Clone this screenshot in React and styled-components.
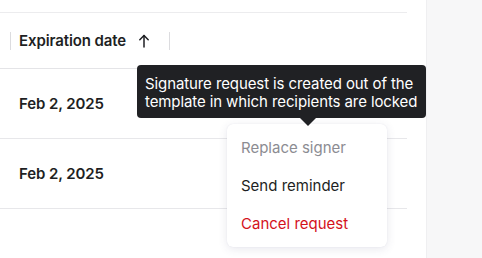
import React from 'react'
import styled, { createGlobalStyle } from 'styled-components'

const GlobalStyle = createGlobalStyle`
  html, body {
    margin: 0;
    padding: 0;
    background: #ffffff;
    font-family: Inter, "Liberation Sans", sans-serif;
    -webkit-font-smoothing: antialiased;
  }
`

const Page = styled.div`
  display: flex;
  width: 482px;
  height: 258px;
  overflow: hidden;
  position: relative;
`

const Main = styled.div`
  width: 426px;
  padding: 12px 19px 0 0;
  box-sizing: border-box;
  background: #ffffff;
`

const Side = styled.div`
  flex: 1;
  background: #f7f7f8;
  border-left: 1px solid #efeff1;
`

const Table = styled.div`
  border-top: 1px solid #ececee;
`

const HeaderRow = styled.div`
  display: flex;
  align-items: center;
  height: 55px;
  border-bottom: 1px solid #e4e4e7;
  padding-left: 10px;
`

const Divider = styled.div`
  width: 1px;
  height: 18px;
  background: #dcdcdf;
`

const HeaderCell = styled.div`
  display: flex;
  align-items: center;
  width: 150px;
  padding-left: 8px;
  font-size: 15px;
  font-weight: 600;
  letter-spacing: -0.1px;
  color: #1e1f23;
`

const SortIcon = styled.svg`
  margin-left: 12px;
  width: 12px;
  height: 14px;
`

const Row = styled.div`
  display: flex;
  align-items: center;
  height: 69px;
  border-bottom: 1px solid #e7e7ea;
  padding-left: 19px;
  font-size: 15px;
  font-weight: 600;
  letter-spacing: -0.1px;
  color: #1e1f23;
`

const Tooltip = styled.div`
  position: absolute;
  left: 137px;
  top: 65px;
  width: 289px;
  height: 53px;
  box-sizing: border-box;
  padding: 10px 8px 0;
  background: #202124;
  color: #ffffff;
  border-radius: 4px;
  font-size: 15px;
  line-height: 18px;
  letter-spacing: -0.1px;

  &::after {
    content: '';
    position: absolute;
    left: 163px;
    bottom: -8px;
    border-left: 8px solid transparent;
    border-right: 8px solid transparent;
    border-top: 8px solid #202124;
  }
`

const Menu = styled.div`
  position: absolute;
  left: 227px;
  top: 124px;
  width: 160px;
  padding: 4px 0 5px;
  background: #ffffff;
  border-radius: 6px;
  box-shadow: 0 2px 10px rgba(60, 60, 110, 0.12), 0 0 1px rgba(60, 60, 110, 0.12);
`

const MenuItem = styled.div`
  height: 38px;
  display: flex;
  align-items: center;
  padding-left: 14px;
  font-size: 15px;
  color: ${props => props.tone === 'muted' ? '#8c8c92' : props.tone === 'danger' ? '#d4111b' : '#1e1f23'};
`

const App = () => {
  return (
    <>
      <GlobalStyle />
      <Page>
        <Main>
          <Table>
            <HeaderRow>
              <Divider />
              <HeaderCell>
                Expiration date
                <SortIcon viewBox="0 0 12 14" fill="none" stroke="#1e1f23" strokeWidth="1.5" strokeLinecap="round" strokeLinejoin="round">
                  <path d="M6 13V1.5" />
                  <path d="M1.8 5.7L6 1.5l4.2 4.2" />
                </SortIcon>
              </HeaderCell>
              <Divider />
            </HeaderRow>
            <Row>Feb 2, 2025</Row>
            <Row>Feb 2, 2025</Row>
          </Table>
        </Main>
        <Side />
        <Menu>
          <MenuItem tone="muted">Replace signer</MenuItem>
          <MenuItem>Send reminder</MenuItem>
          <MenuItem tone="danger">Cancel request</MenuItem>
        </Menu>
        <Tooltip>
          Signature request is created out of the template in which recipients are locked
        </Tooltip>
      </Page>
    </>
  )
}

export default App
